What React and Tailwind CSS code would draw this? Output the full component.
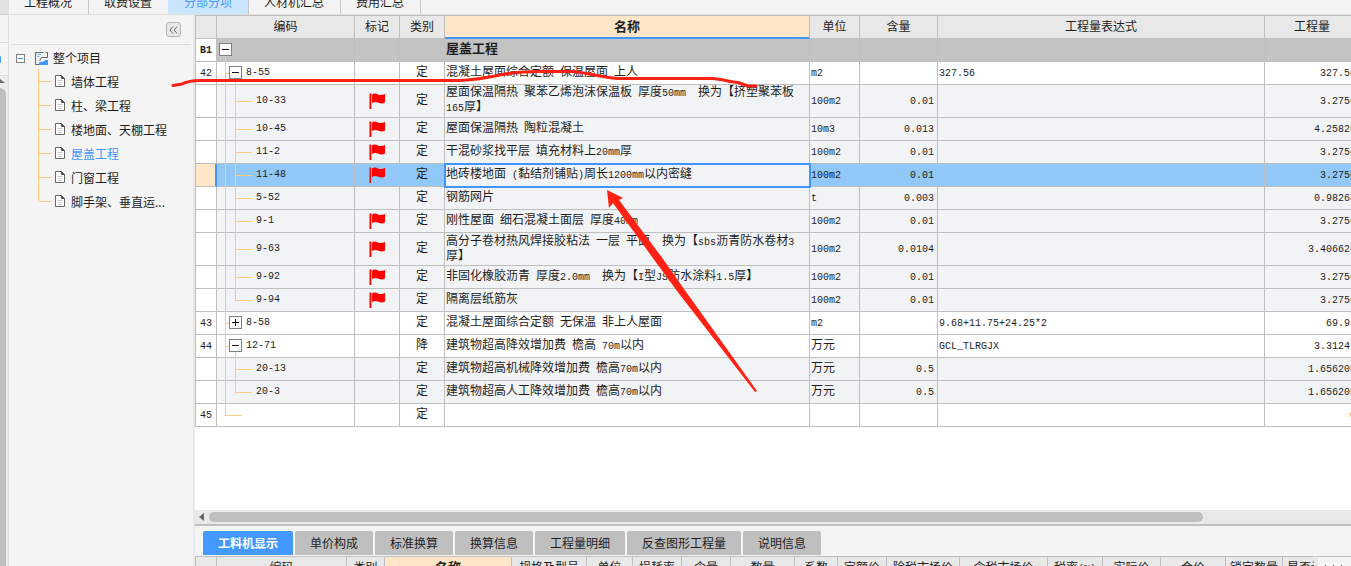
import React, { useState } from 'react';
import clsx from 'clsx';

const topTabs = ['工程概况', '取费设置', '分部分项', '人材机汇总', '费用汇总'];

const sections = ['墙体工程', '柱、梁工程', '楼地面、天棚工程', '屋盖工程', '门窗工程', '脚手架、垂直运...'];

const rows = [
  { no: 'B1', kind: 'group', name: '屋盖工程' },
  { no: '42', kind: 'item', open: true, code: '8-55', type: '定', name: '混凝土屋面综合定额 保温屋面 上人', unit: 'm2', expr: '327.56', qty: '327.56' },
  { kind: 'sub', flag: true, tall: true, code: '10-33', type: '定', name: '屋面保温隔热 聚苯乙烯泡沫保温板 厚度50mm  换为【挤塑聚苯板165厚】', unit: '100m2', content: '0.01', qty: '3.2756' },
  { kind: 'sub', flag: true, code: '10-45', type: '定', name: '屋面保温隔热 陶粒混凝土', unit: '10m3', content: '0.013', qty: '4.25828' },
  { kind: 'sub', flag: true, code: '11-2', type: '定', name: '干混砂浆找平层 填充材料上20mm厚', unit: '100m2', content: '0.01', qty: '3.2756' },
  { kind: 'sub', flag: true, code: '11-48', type: '定', name: '地砖楼地面 (黏结剂铺贴)周长1200mm以内密缝', unit: '100m2', content: '0.01', qty: '3.2756' },
  { kind: 'sub', code: '5-52', type: '定', name: '钢筋网片', unit: 't', content: '0.003', qty: '0.98268' },
  { kind: 'sub', flag: true, code: '9-1', type: '定', name: '刚性屋面 细石混凝土面层 厚度40mm', unit: '100m2', content: '0.01', qty: '3.2756' },
  { kind: 'sub', flag: true, tall: true, code: '9-63', type: '定', name: '高分子卷材热风焊接胶粘法 一层 平面  换为【sbs沥青防水卷材3厚】', unit: '100m2', content: '0.0104', qty: '3.406624' },
  { kind: 'sub', flag: true, code: '9-92', type: '定', name: '非固化橡胶沥青 厚度2.0mm  换为【I型JS防水涂料1.5厚】', unit: '100m2', content: '0.01', qty: '3.2756' },
  { kind: 'sub', flag: true, last: true, code: '9-94', type: '定', name: '隔离层纸筋灰', unit: '100m2', content: '0.01', qty: '3.2756' },
  { no: '43', kind: 'item', code: '8-58', type: '定', name: '混凝土屋面综合定额 无保温 非上人屋面', unit: 'm2', expr: '9.68+11.75+24.25*2', qty: '69.93' },
  { no: '44', kind: 'item', open: true, code: '12-71', type: '降', name: '建筑物超高降效增加费 檐高 70m以内', unit: '万元', expr: 'GCL_TLRGJX', qty: '3.31241' },
  { kind: 'sub', code: '20-13', type: '定', name: '建筑物超高机械降效增加费 檐高70m以内', unit: '万元', content: '0.5', qty: '1.656205' },
  { kind: 'sub', last: true, code: '20-3', type: '定', name: '建筑物超高人工降效增加费 檐高70m以内', unit: '万元', content: '0.5', qty: '1.656205' },
  { no: '45', kind: 'blank', type: '定', qty: '0' },
];

const detailTabs = ['工料机显示', '单价构成', '标准换算', '换算信息', '工程量明细', '反查图形工程量', '说明信息'];

const detailColumns = [
  { label: '', width: 'w-[21px]' },
  { label: '编码', width: 'w-[130px]' },
  { label: '类别', width: 'w-[38px]' },
  { label: '名称', width: 'w-[127px]', active: true },
  { label: '规格及型号', width: 'w-[75px]' },
  { label: '单位', width: 'w-[46px]' },
  { label: '损耗率', width: 'w-[49px]' },
  { label: '含量', width: 'w-[49px]' },
  { label: '数量', width: 'w-[64px]' },
  { label: '系数', width: 'w-[43px]' },
  { label: '定额价', width: 'w-[49px]' },
  { label: '除税市场价', width: 'w-[73px]' },
  { label: '含税市场价', width: 'w-[88px]' },
  { label: '税率(%)', width: 'w-[55px]' },
  { label: '实际价', width: 'w-[58px]' },
  { label: '合价', width: 'w-[65px]' },
  { label: '锁定数量', width: 'w-[57px]' },
  { label: '是否计价', width: 'w-[57px]' },
];

// Latin characters take half the width of a Chinese one
function Mixed({ text }) {
  if (!text) return null;
  return text.split(/([\x20-\x7e]+)/).map((part, i) =>
    i % 2 === 1 ? (
      <span key={i} className="text-[10px]">{part}</span>
    ) : (
      part
    )
  );
}

function Flag() {
  return (
    <svg className="mx-auto block" width="16" height="16" viewBox="0 0 16 16" aria-label="标记">
      <path d="M0.5 0.5h1.5v15.5h-1.5z" fill="#ff0000" />
      <path d="M2 0.5h1v15.5h-1z" fill="#ff9a9a" />
      <path d="M3 1.5C5 0 7 0.4 9 1.4S13 2.2 16 1V9.6C14 10.8 11.5 10.8 9.5 9.8S5 8.8 3 10Z" fill="#ff0000" />
    </svg>
  );
}

function DocIcon() {
  return (
    <svg className="block shrink-0" width="11" height="13" viewBox="0 0 11 13" fill="none">
      <path d="M0.5 0.5H6.5L9.5 3.5V11.5H0.5Z" fill="#fff" stroke="#666" />
      <path d="M6.5 0.5V3.5H9.5Z" fill="#555" stroke="#555" />
      <path d="M2.5 5.5H7.5M2.5 7.5H7.5M2.5 9.5H7.5" stroke="#ccc" />
    </svg>
  );
}

function ProjectIcon() {
  return (
    <svg className="block shrink-0" width="13" height="13" viewBox="0 0 13 13" fill="none">
      <path d="M8.5 0.5H0.5V12.5H12.5" stroke="#666" />
      <path d="M2 2.5H6M2 4.5H4.5" stroke="#7db9fb" />
      <path d="M4.5 9L6.5 5.5H12.5V0.5H10.5" stroke="#666" />
      <path d="M4 13V10.5C6 8.5 7.5 11 9 9L10 8H13V13Z" fill="#4499ff" />
    </svg>
  );
}

function Toggle({ open, onClick }) {
  return (
    <button
      type="button"
      onClick={onClick}
      aria-label={open ? '收起' : '展开'}
      className="block h-[13px] w-[13px] shrink-0 border border-[#808080] bg-white"
    >
      <svg className="block" width="11" height="11" viewBox="0 0 11 11" stroke="#111">
        <path d={open ? 'M2 5.5H9' : 'M2 5.5H9M5.5 2V9'} />
      </svg>
    </button>
  );
}

function VLine({ half }) {
  return (
    <span className="flex w-px shrink-0 flex-col">
      <span className={clsx('w-px bg-[#ffcb80]', half ? 'h-1/2' : 'h-full')} />
    </span>
  );
}

function Code({ children }) {
  return <span className="ml-1 self-center pb-px text-[10px]">{children}</span>;
}

function CodeCell({ row }) {
  return (
    <div className={clsx('-mb-px flex', row.tall ? 'h-[33px]' : 'h-[23px]')}>
      {row.kind === 'group' && (
        <span className="ml-[2px] flex flex-col items-center pt-1">
          <Toggle open />
          <span className="w-px flex-1 bg-[#ffcb80]" />
        </span>
      )}
      {row.kind !== 'group' && (
        <>
          <span className="w-2 shrink-0" />
          <VLine half={row.kind === 'blank'} />
        </>
      )}
      {row.kind === 'blank' && <span className="h-px w-4 self-center bg-[#ffcb80]" />}
      {row.kind === 'item' && (
        <>
          <span className="h-px w-[3px] self-center bg-[#ffcb80]" />
          <span className="flex flex-col items-center pt-1">
            <Toggle open={row.open} />
            {row.open && <span className="w-px flex-1 bg-[#ffcb80]" />}
          </span>
          <Code>{row.code}</Code>
        </>
      )}
      {row.kind === 'sub' && (
        <>
          <span className="w-[9px] shrink-0" />
          <VLine half={row.last} />
          <span className="h-px w-4 self-center bg-[#ffcb80]" />
          <Code>{row.code}</Code>
        </>
      )}
    </div>
  );
}

function Th({ width, active, children }) {
  return (
    <th
      className={clsx(
        'h-[24px] border-t border-r p-0 pt-[2px] text-center whitespace-nowrap border-r-[#bfbfbf] border-t-[#bfbfbf]',
        width,
        active
          ? 'border-b-2 border-b-[#3f96ff] bg-[#ffe6c8] text-[13px] font-bold'
          : 'border-b border-b-[#bfbfbf] bg-[#e8e8e8] font-normal'
      )}
    >
      {children}
    </th>
  );
}

function QuotaTable() {
  const [selected, setSelected] = useState('11-48');
  const cell = 'border-r border-b border-[#bfbfbf] p-0';

  return (
    <table className="w-[calc(100%+9px)] table-fixed border-separate border-spacing-0 border-l border-[#bfbfbf] font-['Liberation_Mono','Noto_Sans_CJK_SC',monospace]">
      <thead>
        <tr>
          <Th width="w-[21px]" />
          <Th width="w-[138px]">编码</Th>
          <Th width="w-[45px]">标记</Th>
          <Th width="w-[45px]">类别</Th>
          <Th width="w-[365px]" active>名称</Th>
          <Th width="w-[50px]">单位</Th>
          <Th width="w-[78px]">含量</Th>
          <Th>工程量表达式</Th>
          <Th width="w-[95px]">工程量</Th>
        </tr>
      </thead>
      <tbody>
        {rows.map((row, i) => {
          const isSelected = row.code === selected;
          const bg = isSelected
            ? 'bg-[#91c8f7]'
            : row.kind === 'group'
              ? 'bg-[#c3c3c3]'
              : row.kind === 'sub'
                ? 'bg-[#f2f3f5]'
                : 'bg-white';
          return (
            <tr
              key={i}
              onClick={() => row.code && setSelected(row.code)}
              className={row.tall ? 'h-[33px]' : 'h-[23px]'}
            >
              <td
                className={clsx(
                  'border-b border-b-[#bfbfbf] p-0 text-center',
                  isSelected ? 'border-r-2 border-r-[#3f96ff] bg-[#ffe6c8]' : 'border-r border-r-[#bfbfbf] bg-white',
                  row.kind === 'group' && 'font-bold'
                )}
              >
                <Mixed text={row.no} />
              </td>
              <td className={clsx(cell, bg)}><CodeCell row={row} /></td>
              <td className={clsx(cell, bg)}>{row.flag && <Flag />}</td>
              <td className={clsx(cell, bg, 'text-center')}>{row.type}</td>
              <td
                className={clsx(
                  cell,
                  'pl-px whitespace-pre-wrap',
                  isSelected ? 'bg-[#f2f3f5] outline-2 -outline-offset-1 outline-[#3f96ff]' : bg,
                  row.kind === 'group' && 'text-[13px] font-bold'
                )}
              >
                <Mixed text={row.name} />
              </td>
              <td className={clsx(cell, bg, 'pl-px')}><Mixed text={row.unit} /></td>
              <td className={clsx(cell, bg, 'pr-[3px] text-right')}><Mixed text={row.content} /></td>
              <td className={clsx(cell, bg, 'pl-px')}><Mixed text={row.expr} /></td>
              <td className={clsx(cell, bg, 'pr-[3px] text-right')}><Mixed text={row.qty} /></td>
            </tr>
          );
        })}
      </tbody>
    </table>
  );
}

function Sidebar() {
  const [current, setCurrent] = useState('屋盖工程');

  return (
    <aside className="w-[186px] shrink-0 border-r-2 border-[#e8e8e8] bg-[#f4f4f4]">
      <div className="mr-[2px] ml-[2px] flex h-[30px] items-center justify-end border-b border-[#dcdcdc] pr-[10px]">
        <button
          type="button"
          aria-label="收起侧栏"
          className="flex h-[15px] w-[15px] items-center justify-center rounded-[3px] border border-[#b5b5b5] bg-[#e8e8e8]"
        >
          <svg width="9" height="8" viewBox="0 0 9 8" fill="none" stroke="#666">
            <path d="M4 0.5L0.8 4L4 7.5M8.2 0.5L5 4L8.2 7.5" />
          </svg>
        </button>
      </div>
      <div className="flex h-6 items-center pt-[2px] pl-[7px]">
        <button type="button" aria-label="收起" className="block h-[9px] w-[9px] border border-[#808080] bg-white">
          <svg className="block" width="7" height="7" viewBox="0 0 7 7" stroke="#3aa0c8">
            <path d="M1 3.5H6" />
          </svg>
        </button>
        <span className="ml-[10px]"><ProjectIcon /></span>
        <span className="ml-[5px]">整个项目</span>
      </div>
      <ul>
        {sections.map((name, i) => (
          <li key={name} className="flex h-6 items-center pl-[29px]">
            <TreeLine last={i === sections.length - 1} />
            <span className="mr-1 h-px w-3 bg-[#ffcb80]" />
            <DocIcon />
            <button
              type="button"
              onClick={() => setCurrent(name)}
              className={clsx('ml-[5px] pt-[2px]', name === current && 'text-[#4499ff]')}
            >
              {name}
            </button>
          </li>
        ))}
      </ul>
    </aside>
  );
}

function TreeLine({ last }) {
  return (
    <span className="flex h-6 w-px flex-col">
      <span className={clsx('w-px bg-[#ffcb80]', last ? 'h-3' : 'h-6')} />
    </span>
  );
}

function LeftStrip() {
  return (
    <div className="flex w-[9px] shrink-0 flex-col overflow-hidden border-r border-[#e0e0e0] bg-[#f4f4f4]">
      <div className="h-[15px] shrink-0 border-b border-[#cfcfcf] bg-[#e2e2e2]" />
      <div className="h-7 shrink-0 border-b border-[#d8d8d8]" />
      <div className="flex h-[33px] shrink-0 items-center border-b border-[#d8d8d8]">
        <span className="h-[7px] w-px rounded-r-full bg-[#4499ff]" />
      </div>
      <div className="flex flex-1 flex-col bg-[#ebebeb]">
        <svg className="block shrink-0" width="6" height="12" viewBox="0 0 6 12">
          <path d="M0 3L5 7H0Z" fill="#6a6a6a" />
        </svg>
        <div className="w-[6px] flex-1 rounded-tr-full bg-[#bfbfbf]" />
      </div>
    </div>
  );
}

function DetailPanel() {
  const [tab, setTab] = useState('工料机显示');

  return (
    <section className="shrink-0">
      <div className="flex h-[30px] items-end gap-[2px] pb-px pl-2">
        {detailTabs.map((name) => (
          <button
            key={name}
            type="button"
            onClick={() => setTab(name)}
            className={clsx(
              'h-6 shrink-0 rounded-t-[2px] px-[15px]',
              name === tab ? 'bg-[#4499ff] font-bold text-white' : 'bg-[#bfbfbf]'
            )}
          >
            {name}
          </button>
        ))}
      </div>
      <div className="flex h-[10px] overflow-hidden">
        <div className="min-w-0 flex-1 overflow-hidden">
          <table className="w-[1145px] table-fixed border-separate border-spacing-0 border-l border-[#bfbfbf] font-['Liberation_Mono','Noto_Sans_CJK_SC',monospace]">
            <thead>
              <tr>
                {detailColumns.map((col, i) => (
                  <Th key={i} width={col.width} active={col.active}>
                    <Mixed text={col.label} />
                  </Th>
                ))}
              </tr>
            </thead>
          </table>
        </div>
        <div className="w-[37px] shrink-0 border-t border-l-4 border-t-[#bfbfbf] border-l-[#e8e8e8] pt-2">
          <svg className="ml-[6px] block" width="20" height="2" viewBox="0 0 20 2" fill="#555">
            <path d="M1 0h1v2H1zM9 0h1v2H9zM17 0h1v2h-1z" />
          </svg>
        </div>
      </div>
    </section>
  );
}

// Hand-drawn red underline and arrow over the sheet
function Markup() {
  return (
    <svg className="pointer-events-none absolute top-0 left-0" width="800" height="420" viewBox="0 0 800 420" fill="none">
      <path
        d="M173 85.5L182 84C186 82 191 80.5 200 80.5H458C475 80 488 77.5 500 75C515 72 525 71.5 540 71.5H572C588 72.5 600 77 617 78.5H712C722 79 730 82 738 82.5L748 86H756"
        stroke="#ff2113"
        strokeWidth="3"
        strokeLinecap="round"
        strokeLinejoin="round"
      />
      <path d="M607 190L623 198L619 200L663 259L684 289L757 391L755 392L677 291L655 261L613 203L609 208Z" fill="#ff2113" />
    </svg>
  );
}

export default function App() {
  const [activeTab, setActiveTab] = useState('分部分项');

  return (
    <div className="relative flex h-screen overflow-hidden bg-[#f4f4f4] font-['Noto_Sans_CJK_SC',sans-serif] text-[12px] leading-[14px] text-[#1e1e1e]">
      <LeftStrip />
      <div className="flex min-w-0 flex-1 flex-col">
        <nav className="flex h-[15px] shrink-0 items-end overflow-hidden border-b border-[#dedede]">
          {topTabs.map((name) => (
            <button
              key={name}
              type="button"
              onClick={() => setActiveTab(name)}
              className={clsx(
                '-ml-px h-6 shrink-0 border-r border-[#c8c8c8] px-4 text-center',
                name === activeTab && 'bg-[#cbe6ff] text-[#4499ff]'
              )}
            >
              {name}
            </button>
          ))}
        </nav>
        <div className="flex min-h-0 flex-1">
          <Sidebar />
          <main className="flex min-w-0 flex-1 flex-col">
            <div className="min-h-0 flex-1 overflow-hidden bg-white">
              <QuotaTable />
            </div>
            <div className="flex h-[14px] shrink-0 items-center bg-[#e8e8e8] pl-1">
              <svg className="block shrink-0" width="6" height="8" viewBox="0 0 6 8">
                <path d="M5 0V8L0 4Z" fill="#666" />
              </svg>
              <div className="mr-[148px] ml-1 h-[10px] flex-1 rounded-full bg-[#bfbfbf]" />
            </div>
            <div className="h-[2px] shrink-0 bg-[#bfbfbf]" />
            <DetailPanel />
          </main>
        </div>
      </div>
      <Markup />
    </div>
  );
}
